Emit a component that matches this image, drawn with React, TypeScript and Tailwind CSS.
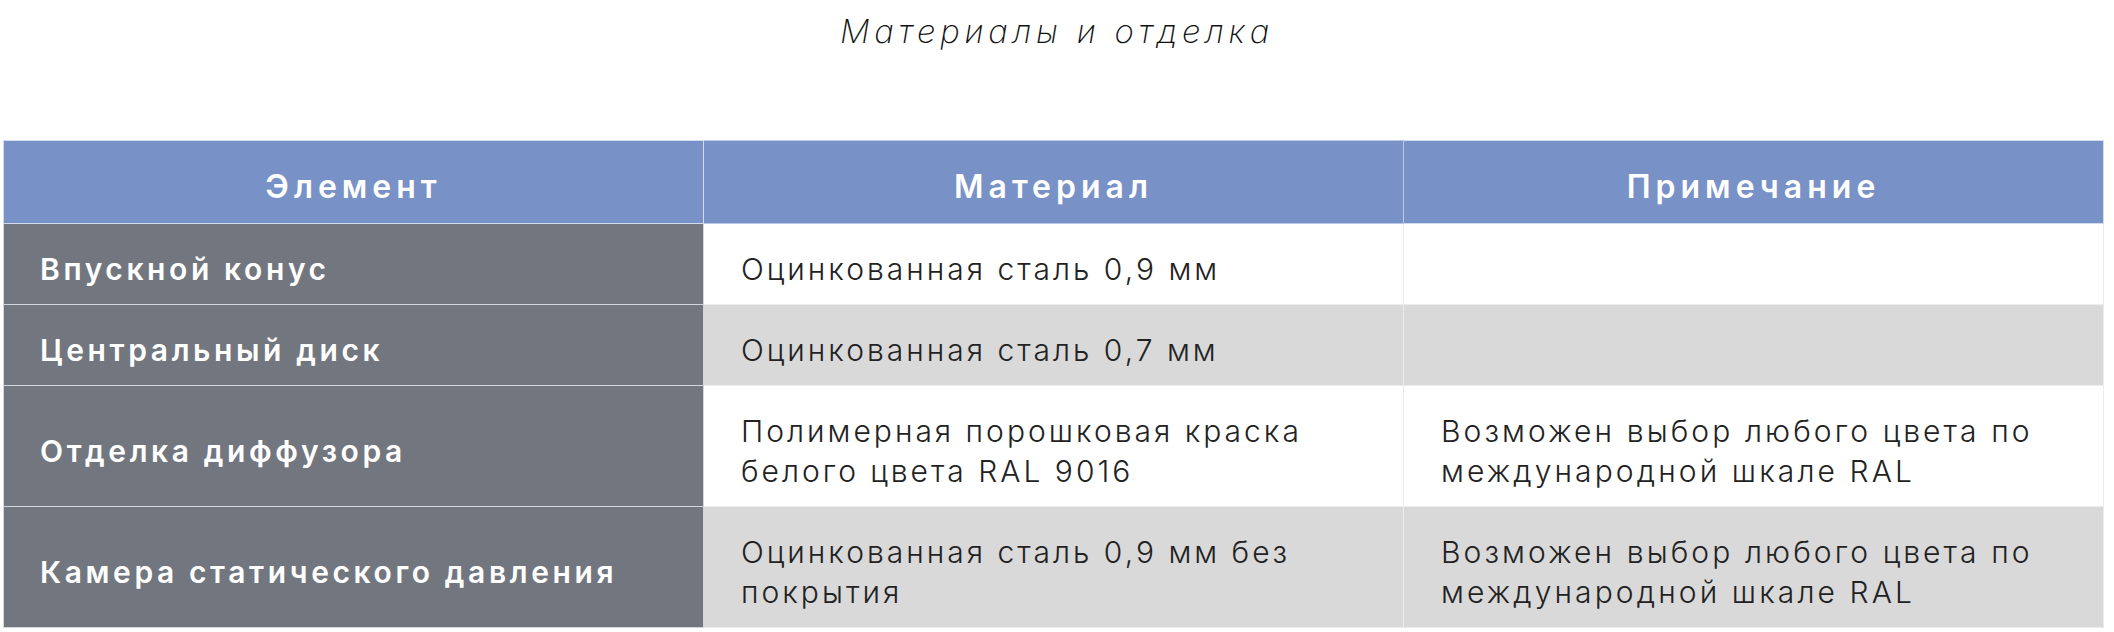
const rows = [
  { label: "Впускной конус", material: ["Оцинкованная сталь 0,9 мм"], note: [] as string[] },
  { label: "Центральный диск", material: ["Оцинкованная сталь 0,7 мм"], note: [] as string[] },
  {
    label: "Отделка диффузора",
    material: ["Полимерная порошковая краска", "белого цвета RAL 9016"],
    note: ["Возможен выбор любого цвета по", "международной шкале RAL"],
  },
  {
    label: "Камера статического давления",
    material: ["Оцинкованная сталь 0,9 мм без", "покрытия"],
    note: ["Возможен выбор любого цвета по", "международной шкале RAL"],
  },
];

function Lines({ lines }: { lines: string[] }) {
  return (
    <>
      {lines.map((l, i) => (
        <div key={i} className="whitespace-nowrap">
          {l}
        </div>
      ))}
    </>
  );
}

export default function App() {
  return (
    <div className="w-[2114px] h-[632px] bg-white font-['Inter',sans-serif]">
      <h1 className="pt-[11px] text-center text-[33px] leading-[40px] italic font-extralight tracking-[4.8px] text-[#111]">
        Материалы и отделка
      </h1>

      <table className="mt-[89px] ml-[3px] w-[2101px] table-fixed border-collapse">
        <thead>
          <tr className="bg-[#7891c6]">
            <th className="w-1/3 border border-[#d4dbea] pt-[26px] pb-[16px] text-[32px] leading-[40px] font-semibold tracking-[5px] text-white">
              Элемент
            </th>
            <th className="w-1/3 border border-[#b9c8e6] pt-[26px] pb-[16px] text-[32px] leading-[40px] font-semibold tracking-[5px] text-white">
              Материал
            </th>
            <th className="w-1/3 border border-[#d4dbea] pt-[26px] pb-[16px] text-[32px] leading-[40px] font-semibold tracking-[5px] text-white">
              Примечание
            </th>
          </tr>
        </thead>
        <tbody>
          {rows.map((r, i) => (
            <tr key={i} className={i % 2 === 0 ? "bg-white" : "bg-[#d9d9d9]"}>
              <td className="border border-[#d4d6db] bg-[#72767f] px-[36px] pt-[25px] pb-[15px] text-[30px] leading-[40px] font-semibold tracking-[3.6px] text-white">
                {r.label}
              </td>
              <td className="border border-[#ececec] px-[37px] pt-[25px] pb-[15px] text-[30px] leading-[40px] font-light tracking-[3px] text-[#222]">
                <Lines lines={r.material} />
              </td>
              <td className="border border-[#ececec] px-[37px] pt-[25px] pb-[15px] text-[30px] leading-[40px] font-light tracking-[3.1px] text-[#222]">
                <Lines lines={r.note} />
              </td>
            </tr>
          ))}
        </tbody>
      </table>
    </div>
  );
}
